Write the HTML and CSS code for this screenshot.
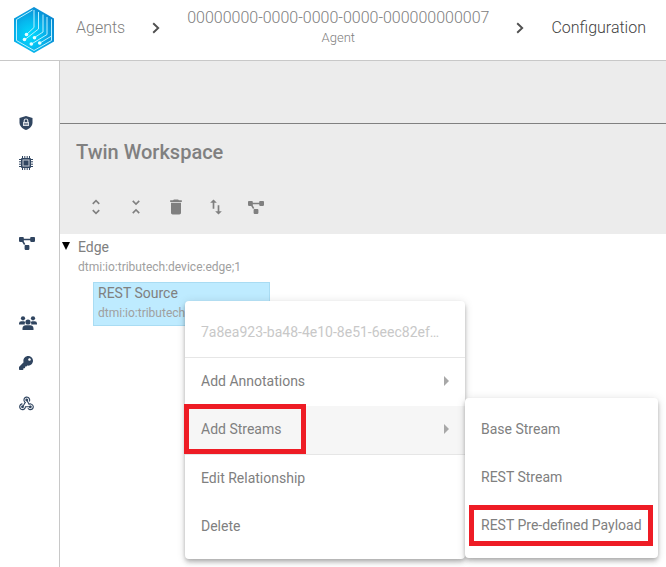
FILE: index.html
```html
<!DOCTYPE html>
<html lang="en">
<head>
<meta charset="utf-8">
<meta name="viewport" content="width=device-width, initial-scale=1">
<title>Twin Workspace</title>
<link rel="stylesheet" href="styles.css">
</head>
<body>
<svg class="defs" aria-hidden="true">
  <symbol id="diagram" viewBox="0 0 640 512"><path d="M384 320H256c-17.67 0-32 14.33-32 32v128c0 17.67 14.33 32 32 32h128c17.67 0 32-14.33 32-32V352c0-17.67-14.33-32-32-32zM192 32c0-17.67-14.33-32-32-32H32C14.33 0 0 14.33 0 32v128c0 17.67 14.33 32 32 32h95.72l73.16 128.04C211.98 300.98 232.4 288 256 288h.28L192 175.51V128h256V64H192V32zM608 0H480c-17.67 0-32 14.33-32 32v128c0 17.67 14.33 32 32 32h128c17.67 0 32-14.33 32-32V32c0-17.67-14.33-32-32-32z"/></symbol>
  <symbol id="chevron" viewBox="0 0 8 12"><path d="M1.2 1.2 6.2 6l-5 4.8" fill="none" stroke="currentColor" stroke-width="1.9"/></symbol>
</svg>
<header class="topbar">
  <a class="logo" href="#" aria-label="Home">
    <svg viewBox="0 0 40 46" width="40" height="46">
      <defs>
        <radialGradient id="glow" cx=".4" cy=".62" r=".65">
          <stop offset="0" stop-color="#00dcff"/><stop offset=".5" stop-color="#06b8ee"/><stop offset="1" stop-color="#0a8ad2"/>
        </radialGradient>
      </defs>
      <path d="M20 0 40 11.500V34.500L20 46 0 34.500V11.500Z" fill="url(#glow)"/>
      <g fill="none" stroke="#b9f1ff" stroke-width="1">
        <path d="M18.500 3 2.500 12.500V33.500L20 43.500 37.500 33.500V12.500"/>
        <path d="M20 3V20.500L12.500 27.500"/>
        <path d="M24.500 5V22L11 32.500"/>
        <path d="M29 7.500V25L20.500 30.500"/>
        <path d="M33 10V27.500L17.500 37"/>
        <path d="M37.500 12.500V29L26 36"/>
      </g>
      <g fill="#e9fcff">
        <circle cx="12.500" cy="27.500" r="1.800"/><circle cx="10.500" cy="32.500" r="1.800"/>
        <circle cx="20.500" cy="30.700" r="1.800"/><circle cx="17.300" cy="37" r="1.800"/>
        <circle cx="25.700" cy="36" r="1.800"/>
      </g>
    </svg>
  </a>
  <nav class="crumbs" aria-label="Breadcrumb">
    <a class="crumb" href="#">Agents</a>
    <svg class="sep" width="8" height="12"><use href="#chevron"/></svg>
    <a class="crumb agent" href="#"><span>00000000-0000-0000-0000-000000000007</span><small>Agent</small></a>
    <svg class="sep" width="8" height="12"><use href="#chevron"/></svg>
    <a class="crumb current" href="#" aria-current="page">Configuration</a>
  </nav>
</header>
<div class="shell">
  <nav class="sidebar" aria-label="Main">
    <a href="#" aria-label="Security"><svg viewBox="0 0 14 14" width="14" height="14"><path fill-rule="evenodd" d="M7 0 13.500 2v4.500c0 3.500-2.700 6-6.500 7.500C3.200 12.500.5 10 .5 6.500V2Z"/><path d="M4 6h6v4H4z" fill="#d9dee4"/><path d="M5.200 6V4.800a1.800 1.800 0 0 1 3.600 0V6" fill="none" stroke="#d9dee4" stroke-width="1.200"/><path d="M5 7.500h4v1H5z"/></svg></a>
    <a href="#" aria-label="Devices"><svg viewBox="0 0 14 14" width="14" height="14"><path d="M3.500 0v14M5.800 0v14M8.200 0v14M10.500 0v14M0 3.500h14M0 5.800h14M0 8.200h14M0 10.500h14" stroke="currentColor" stroke-width="1"/><rect x="2" y="2" width="10" height="10" rx="1"/><rect x="4" y="4" width="6" height="6" fill="none" stroke="#c3cad2" stroke-width="1"/></svg></a>
    <a class="gap" href="#" aria-label="Twins"><svg width="16" height="13"><use href="#diagram"/></svg></a>
    <a class="gap" href="#" aria-label="Users"><svg viewBox="0 0 18 14" width="18" height="14"><circle cx="4" cy="2.300" r="2.100"/><circle cx="14" cy="2.300" r="2.100"/><path d="M0 8.500V7.500a2.300 2.300 0 0 1 2.300-2.200h2.400c.6 0 1.100.2 1.500.6-.5.700-.6 1.700-.4 2.600ZM18 8.500V7.500a2.300 2.300 0 0 0-2.300-2.200h-2.400c-.6 0-1.100.2-1.500.6.5.7.6 1.700.4 2.600Z"/><circle cx="9" cy="6" r="2.600"/><path d="M3.500 14v-1.500c0-2 1.500-3.200 3.300-3.200h4.400c1.800 0 3.300 1.200 3.300 3.200V14Z"/></svg></a>
    <a href="#" aria-label="Keys"><svg viewBox="0 0 512 512" width="14" height="14"><path d="M512 176.001C512 273.203 433.202 352 336 352c-11.220 0-22.190-1.062-32.827-3.069l-24.012 27.014A23.999 23.999 0 0 1 261.223 384H224v40c0 13.255-10.745 24-24 24h-40v40c0 13.255-10.745 24-24 24H24c-13.255 0-24-10.745-24-24v-78.059c0-6.365 2.529-12.470 7.029-16.971l161.802-161.802C163.108 213.814 160 195.271 160 176 160 78.798 238.797.001 335.999 0 433.488-.001 512 78.511 512 176.001zM336 128c0 26.510 21.490 48 48 48s48-21.490 48-48-21.490-48-48-48-48 21.490-48 48z"/></svg></a>
    <a href="#" aria-label="Webhooks"><svg viewBox="2 2.500 20 19" width="15" height="15"><path d="M10.460,19C9,21.070 6.150,21.590 4.090,20.150C2.040,18.710 1.560,15.840 3,13.750C3.870,12.500 5.210,11.830 6.580,11.770L6.630,13.200C5.720,13.270 4.840,13.740 4.270,14.560C3.270,16 3.580,17.940 4.950,18.910C6.330,19.870 8.260,19.500 9.260,18.070C9.570,17.620 9.750,17.130 9.820,16.630V15.620L15.400,15.580L15.470,15.470C16,14.550 17.150,14.230 18.050,14.750C18.950,15.270 19.260,16.430 18.730,17.350C18.200,18.260 17.040,18.580 16.140,18.060C15.730,17.830 15.440,17.460 15.310,17.040L11.240,17.060C11.130,17.730 10.870,18.380 10.460,19M17.740,11.860C20.270,12.170 22.070,14.440 21.760,16.930C21.450,19.430 19.150,21.200 16.620,20.890C15.130,20.710 13.900,19.860 13.190,18.680L14.430,17.960C14.920,18.730 15.750,19.280 16.750,19.410C18.500,19.620 20.050,18.430 20.260,16.760C20.470,15.090 19.230,13.560 17.500,13.350C16.960,13.290 16.440,13.360 15.970,13.530L15.120,13.970L12.540,9.200H12.320C11.260,9.160 10.410,8.290 10.440,7.250C10.470,6.210 11.400,5.400 12.450,5.440C13.500,5.500 14.330,6.350 14.300,7.390C14.280,7.830 14.110,8.230 13.840,8.540L15.740,12.050C16.360,11.850 17.040,11.780 17.740,11.860M8.250,9.140C7.250,6.790 8.310,4.100 10.620,3.120C12.940,2.140 15.620,3.250 16.620,5.600C17.210,6.970 17.090,8.470 16.420,9.670L15.180,8.950C15.600,8.140 15.670,7.150 15.270,6.220C14.590,4.620 12.780,3.850 11.230,4.500C9.670,5.160 8.970,7 9.650,8.600C9.930,9.260 10.400,9.770 10.970,10.110L11.360,10.320L8.290,15.310C8.320,15.360 8.360,15.420 8.390,15.500C8.880,16.410 8.540,17.560 7.620,18.050C6.710,18.540 5.560,18.180 5.060,17.240C4.570,16.310 4.910,15.160 5.830,14.670C6.220,14.460 6.650,14.410 7.060,14.500L9.370,10.730C8.900,10.300 8.500,9.760 8.250,9.140Z"/></svg></a>
  </nav>
  <main class="content">
    <div class="summary"></div>
    <section class="workspace">
      <div class="panel-head">
        <h1>Twin Workspace</h1>
        <div class="toolbar">
          <button type="button" aria-label="Expand all"><svg viewBox="0 0 24 24" width="20" height="20"><path d="M12 5.830 15.170 9l1.410-1.410L12 3 7.410 7.590 8.830 9 12 5.830zm0 12.340L8.830 15l-1.410 1.410L12 21l4.590-4.590L15.170 15 12 18.170z"/></svg></button>
          <button type="button" aria-label="Collapse all"><svg viewBox="0 0 24 24" width="20" height="20"><path d="M7.410 18.590 8.830 20 12 16.830 15.170 20l1.410-1.410L12 14l-4.590 4.590zm9.180-13.180L15.170 4 12 7.170 8.830 4 7.410 5.410 12 10l4.590-4.590z"/></svg></button>
          <button type="button" aria-label="Delete"><svg viewBox="0 0 24 24" width="20" height="20"><path d="M6 19c0 1.100.9 2 2 2h8c1.100 0 2-.9 2-2V7H6v12zM19 4h-3.500l-1-1h-5l-1 1H5v2h14V4z"/></svg></button>
          <button type="button" aria-label="Import or export"><svg viewBox="0 0 24 24" width="20" height="20"><path d="M9 3 5 6.990h3V14h2V6.990h3L9 3zm7 14.010V10h-2v7.010h-3L15 21l4-3.990h-3z"/></svg></button>
          <button type="button" aria-label="Show graph"><svg width="16" height="13"><use href="#diagram"/></svg></button>
        </div>
      </div>
      <div class="tree">
        <div class="node root">
          <svg class="toggle" viewBox="0 0 8 8" width="8" height="8"><path d="M0 0h8L4 8Z"/></svg>
          <div><div class="name">Edge</div><div class="type">dtmi:io:tributech:device:edge;1</div></div>
        </div>
        <div class="node child">
          <div class="name">REST Source</div>
          <div class="type">dtmi:io:tributech</div>
          <div class="menu context">
            <button type="button" class="item" disabled>7a8ea923-ba48-4e10-8e51-6eec82ef…</button>
            <hr>
            <button type="button" class="item">Add Annotations<i class="arrow"></i></button>
            <div class="branch">
              <button type="button" class="item active">Add Streams<i class="arrow"></i></button>
              <i class="mark mark-streams"></i>
              <div class="menu submenu">
                <button type="button" class="item">Base Stream</button>
                <button type="button" class="item">REST Stream</button>
                <button type="button" class="item">REST Pre-defined Payload</button>
                <i class="mark mark-payload"></i>
              </div>
            </div>
            <hr>
            <button type="button" class="item">Edit Relationship</button>
            <button type="button" class="item">Delete</button>
          </div>
        </div>
      </div>
    </section>
  </main>
</div>
</body>
</html>
```

FILE: styles.css
```css
* {
  box-sizing: border-box;
}

body {
  margin: 0;
  min-height: 100vh;
  display: flex;
  flex-direction: column;
  overflow: hidden;
  background: #fff;
  color: #808080;
  font-family: Roboto, "Liberation Sans", sans-serif;
  font-size: 14px;
  line-height: 20px;
}

svg {
  display: block;
  flex: none;
  fill: currentColor;
}

a {
  color: inherit;
  text-decoration: none;
}

button {
  padding: 0;
  border: 0;
  background: none;
  color: inherit;
  font: inherit;
}

.defs {
  position: absolute;
  width: 0;
  height: 0;
}

.topbar {
  display: flex;
  align-items: center;
  height: 61px;
  padding: 0 20px 0 14px;
  border-bottom: 1px solid #c8c8c8;
}

.crumbs {
  flex: 1;
  display: flex;
  align-items: center;
  justify-content: space-between;
  margin-left: 22px;
  padding-bottom: 4px;
}

.crumb {
  font-size: 16px;
  font-weight: 300;
  white-space: nowrap;
}

.agent {
  display: flex;
  flex-direction: column;
  align-items: center;
}

.agent small {
  font-size: 13px;
}

.current {
  color: #424242;
}

.sep {
  color: #505050;
}

.shell {
  flex: 1;
  display: flex;
}

.sidebar {
  flex: none;
  width: 60px;
  padding: 42px 0 0 19px;
  border-right: 1px solid #c8c8c8;
  color: #304560;
}

.sidebar a {
  display: flex;
  align-items: center;
  height: 40px;
}

.sidebar .gap {
  margin-top: 40px;
}

.content {
  flex: 1;
  min-width: 0;
}

.summary {
  height: 63px;
  border-bottom: 1px solid #808080;
  background: #ececec;
}

.panel-head {
  height: 110px;
  padding: 16px 16px 0;
  background: #ececec;
}

h1 {
  margin: 0 0 23px;
  font-size: 20px;
  font-weight: 500;
  line-height: 24px;
}

.toolbar {
  display: flex;
}

.toolbar button {
  display: flex;
  align-items: center;
  justify-content: center;
  width: 40px;
  height: 40px;
}

.node {
  line-height: 20px;
}

.root {
  display: flex;
  gap: 8px;
  padding: 3px 0 0 2px;
}

.toggle {
  margin-top: 5px;
  color: #000;
}

.type {
  font-size: 12px;
  color: #a0a0a0;
}

.child {
  position: relative;
  width: 177px;
  height: 44px;
  margin: 5px 0 0 33px;
  padding: 0 4px;
  border: 1px solid #a9dcf3;
  background: #beebff;
}

.menu {
  position: absolute;
  padding: 8px 0;
  border-radius: 4px;
  background: #fff;
  box-shadow: 0 2px 4px -1px rgba(0, 0, 0, .2), 0 4px 5px rgba(0, 0, 0, .14), 0 1px 10px rgba(0, 0, 0, .12);
}

.context {
  top: 18px;
  left: 91px;
  width: 280px;
}

.submenu {
  top: -8px;
  left: 100%;
  width: 193px;
}

.menu hr {
  height: 1px;
  margin: 0;
  border: 0;
  background: #e6e6e6;
}

.item {
  display: flex;
  align-items: center;
  justify-content: space-between;
  width: 100%;
  height: 48px;
  padding: 0 16px 2px;
  white-space: nowrap;
}

.item:disabled {
  color: #c8c8c8;
}

.active {
  background: #f6f6f6;
}

.arrow {
  border: 5px solid transparent;
  border-left-color: #a8a8a8;
  border-right-width: 0;
}

.branch {
  position: relative;
}

.mark {
  position: absolute;
  border: 5px solid #ee1c25;
  pointer-events: none;
}

.mark-streams {
  top: -2px;
  left: -1px;
  width: 122px;
  height: 50px;
}

.mark-payload {
  right: 5px;
  bottom: 12px;
  left: 4px;
  height: 41px;
}
```
